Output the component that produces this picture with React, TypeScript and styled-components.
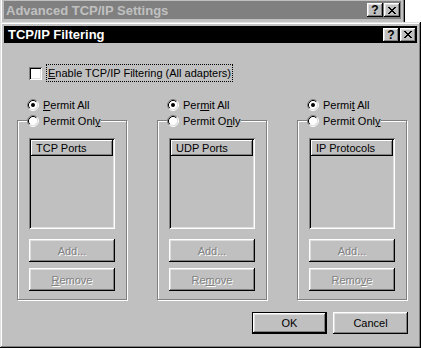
import React from 'react';
import styled, { createGlobalStyle } from 'styled-components';

const GlobalStyle = createGlobalStyle`
  html, body {
    margin: 0;
    padding: 0;
    background: #fff;
  }
  body {
    font-family: "Liberation Sans", Arial, sans-serif;
    font-size: 11px;
    color: #000;
  }
`;

const raised = `
  box-shadow: inset -1px -1px #000, inset 1px 1px #fff, inset -2px -2px #808080, inset 2px 2px #dfdfdf;
`;

const sunken = `
  box-shadow: inset 1px 1px #808080, inset -1px -1px #fff, inset 2px 2px #000, inset -2px -2px #dfdfdf;
`;

interface GroupData {
  header: string;
  permitAll: [string, number];
  permitOnly: [string, number];
  add: [string, number];
  remove: [string, number];
}

const groups: GroupData[] = [
  { header: 'TCP Ports', permitAll: ['Permit All', 0], permitOnly: ['Permit Only', 10], add: ['Add...', -1], remove: ['Remove', 0] },
  { header: 'UDP Ports', permitAll: ['Permit All', 3], permitOnly: ['Permit Only', 8], add: ['Add...', -1], remove: ['Remove', 2] },
  { header: 'IP Protocols', permitAll: ['Permit All', 5], permitOnly: ['Permit Only', 10], add: ['Add...', -1], remove: ['Remove', 4] },
];

const Mnemonic: React.FC<{ text: string; index: number }> = ({ text, index }) => {
  if (index < 0) return <>{text}</>;
  return (
    <>
      {text.slice(0, index)}
      <Key>{text[index]}</Key>
      {text.slice(index + 1)}
    </>
  );
};

const Radio: React.FC<{ checked?: boolean }> = ({ checked }) => (
  <RadioIcon width="12" height="12" viewBox="0 0 12 12">
    <circle cx="6" cy="6" r="4.5" fill="#fff" />
    <path d="M2.11 9.89 A5.5 5.5 0 0 1 9.89 2.11" fill="none" stroke="#808080" />
    <path d="M9.89 2.11 A5.5 5.5 0 0 1 2.11 9.89" fill="none" stroke="#fff" />
    <path d="M2.82 9.18 A4.5 4.5 0 0 1 9.18 2.82" fill="none" stroke="#000" />
    <path d="M9.18 2.82 A4.5 4.5 0 0 1 2.82 9.18" fill="none" stroke="#dfdfdf" />
    {checked && <circle cx="6" cy="6" r="2" fill="#000" />}
  </RadioIcon>
);

const CloseGlyph = () => (
  <svg width="8" height="7" viewBox="0 0 8 7" shapeRendering="crispEdges">
    <path
      fill="#000"
      d="M0 0h2v1H0z M6 0h2v1H6z M1 1h2v1H1z M5 1h2v1H5z M2 2h4v1H2z M3 3h2v1H3z M2 4h4v1H2z M1 5h2v1H1z M5 5h2v1H5z M0 6h2v1H0z M6 6h2v1H6z"
    />
  </svg>
);

const TitleControls = () => (
  <TitleButtons>
    <TitleButton>?</TitleButton>
    <TitleButton>
      <CloseGlyph />
    </TitleButton>
  </TitleButtons>
);

const FilterGroup: React.FC<{ data: GroupData }> = ({ data }) => (
  <Column>
    <PermitAllRow>
      <Radio checked />
      <span>
        <Mnemonic text={data.permitAll[0]} index={data.permitAll[1]} />
      </span>
    </PermitAllRow>
    <Group>
      <Legend>
        <Radio />
        <span>
          <Mnemonic text={data.permitOnly[0]} index={data.permitOnly[1]} />
        </span>
      </Legend>
      <ListBox>
        <ListHeader>{data.header}</ListHeader>
      </ListBox>
      <PushButton $first disabled>
        <Mnemonic text={data.add[0]} index={data.add[1]} />
      </PushButton>
      <PushButton disabled>
        <Mnemonic text={data.remove[0]} index={data.remove[1]} />
      </PushButton>
    </Group>
  </Column>
);

const App: React.FC = () => (
  <>
    <GlobalStyle />
    <Desktop>
      <Window $top={-3} $left={0} $width={405} $height={380}>
        <TitleBar $active={false} $height={18}>
          <TitleText $inset={2}>Advanced TCP/IP Settings</TitleText>
          <TitleControls />
        </TitleBar>
      </Window>

      <Window $top={22} $left={0} $width={421} $height={326}>
        <TitleBar $active $height={17}>
          <TitleText $inset={4}>TCP/IP Filtering</TitleText>
          <TitleControls />
        </TitleBar>
        <Body>
          <CheckRow>
            <CheckBox />
            <FocusLabel>
              <Mnemonic text="Enable TCP/IP Filtering (All adapters)" index={0} />
            </FocusLabel>
          </CheckRow>
          <Columns>
            {groups.map(g => (
              <FilterGroup key={g.header} data={g} />
            ))}
          </Columns>
          <ButtonRow>
            <DialogButton $default>OK</DialogButton>
            <DialogButton>Cancel</DialogButton>
          </ButtonRow>
        </Body>
      </Window>
    </Desktop>
  </>
);

const Desktop = styled.div`
  position: relative;
  width: 421px;
  height: 348px;
  overflow: hidden;
  background: #fff;
`;

const Window = styled.div<{ $top: number; $left: number; $width: number; $height: number }>`
  position: absolute;
  top: ${p => p.$top}px;
  left: ${p => p.$left}px;
  width: ${p => p.$width}px;
  height: ${p => p.$height}px;
  box-sizing: border-box;
  padding: 4px;
  display: flex;
  flex-direction: column;
  background: #c0c0c0;
  box-shadow: inset -1px -1px #000, inset 1px 1px #dfdfdf, inset -2px -2px #808080, inset 2px 2px #fff;
`;

const TitleBar = styled.div<{ $active: boolean; $height: number }>`
  height: ${p => p.$height}px;
  flex-shrink: 0;
  display: flex;
  align-items: center;
  justify-content: space-between;
  padding-right: 1px;
  background: ${p => (p.$active ? '#000' : '#808080')};
  color: ${p => (p.$active ? '#fff' : '#c0c0c0')};
`;

const TitleText = styled.div<{ $inset: number }>`
  padding-left: ${p => p.$inset}px;
  font-family: "Liberation Sans", Arial, sans-serif;
  font-weight: bold;
  font-size: 13px;
  white-space: nowrap;
`;

const TitleButtons = styled.div`
  display: flex;
  gap: 1px;
`;

const TitleButton = styled.div`
  width: 16px;
  height: 14px;
  display: flex;
  align-items: center;
  justify-content: center;
  background: #c0c0c0;
  color: #000;
  font-weight: bold;
  font-size: 12px;
  line-height: 1;
  ${raised}
`;

const Body = styled.div`
  flex: 1;
  display: flex;
  flex-direction: column;
  padding: 21px 10px 0 13px;
`;

const CheckRow = styled.div`
  display: flex;
  align-items: center;
  gap: 4px;
  margin-left: 12px;
`;

const CheckBox = styled.span`
  width: 13px;
  height: 13px;
  background: #fff;
  ${sunken}
`;

const FocusLabel = styled.span`
  border: 1px dotted #000;
  padding: 2px 1px;
  line-height: 12px;
  white-space: nowrap;
`;

const Key = styled.u`
  text-decoration-thickness: 1px;
  text-underline-offset: 1px;
`;

const Columns = styled.div`
  display: grid;
  grid-template-columns: repeat(3, 110px);
  column-gap: 30px;
  margin-top: 15px;
`;

const Column = styled.div`
  display: flex;
  flex-direction: column;
`;

const RadioRow = styled.div`
  height: 16px;
  display: flex;
  align-items: center;
  gap: 4px;
  white-space: nowrap;
`;

const PermitAllRow = styled(RadioRow)`
  padding-left: 10px;
`;

const RadioIcon = styled.svg`
  flex-shrink: 0;
  display: block;
`;

const Group = styled.div`
  position: relative;
  margin-top: 7px;
  border: 1px solid #808080;
  box-shadow: 1px 1px 0 #fff, inset 1px 1px 0 #fff;
  padding: 17px 11px 8px;
  display: flex;
  flex-direction: column;
`;

const Legend = styled(RadioRow)`
  position: absolute;
  top: -8px;
  left: 9px;
  padding-right: 1px;
  background: #c0c0c0;
`;

const ListBox = styled.div`
  height: 91px;
  box-sizing: border-box;
  padding: 2px;
  background: #c0c0c0;
  ${sunken}
`;

const ListHeader = styled.div`
  height: 16px;
  display: flex;
  align-items: center;
  padding-left: 5px;
  box-shadow: inset -1px -1px #000, inset 1px 1px #fff, inset -2px -2px #808080;
`;

const PushButton = styled.button<{ $first?: boolean }>`
  height: 23px;
  margin-top: ${p => (p.$first ? 10 : 6)}px;
  padding: 0;
  border: none;
  background: #c0c0c0;
  font-family: "Liberation Sans", Arial, sans-serif;
  font-size: 11px;
  color: #808080;
  text-shadow: 1px 1px 0 #fff;
  ${raised}
`;

const ButtonRow = styled.div`
  display: flex;
  justify-content: flex-end;
  gap: 6px;
  margin-top: 12px;
  margin-right: -1px;
`;

const DialogButton = styled.button<{ $default?: boolean }>`
  width: 75px;
  height: 22px;
  padding: 0;
  box-sizing: border-box;
  border: ${p => (p.$default ? '1px solid #000' : 'none')};
  background: #c0c0c0;
  font-family: "Liberation Sans", Arial, sans-serif;
  font-size: 11px;
  color: #000;
  ${raised}
`;

export default App;
